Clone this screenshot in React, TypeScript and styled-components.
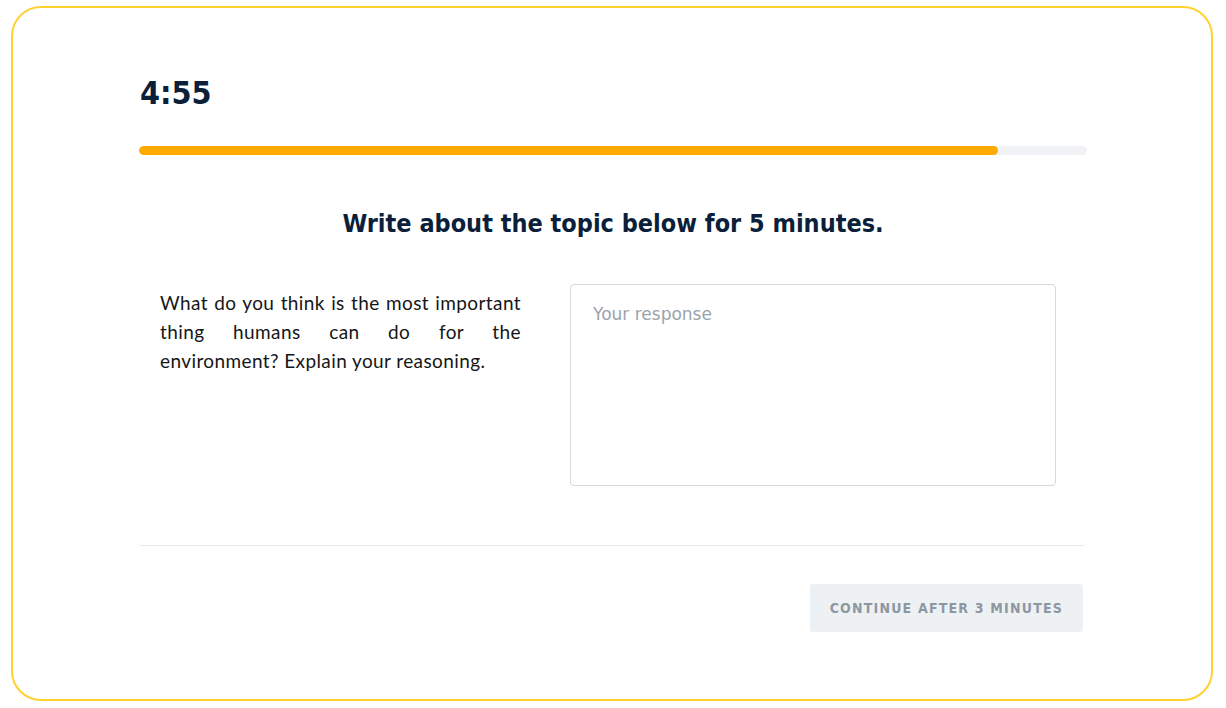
import React from 'react';
import styled, { createGlobalStyle } from 'styled-components';

const GlobalStyle = createGlobalStyle`
  html, body {
    margin: 0;
    padding: 0;
    background: #ffffff;
  }
  * {
    box-sizing: border-box;
  }
`;

const Frame = styled.div`
  margin: 6px 0 0 11px;
  width: 1202px;
  height: 695px;
  border: 2px solid #ffd12e;
  border-radius: 30px;
  background: #ffffff;
  padding-top: 65px;
`;

const Content = styled.div`
  width: 948px;
  margin: 0 0 0 126px;
  display: flex;
  flex-direction: column;
`;

const Timer = styled.div`
  font-family: 'DejaVu Sans Condensed', 'DejaVu Sans', sans-serif;
  font-weight: 700;
  font-size: 32px;
  line-height: 40px;
  color: #0c1f3a;
  padding-left: 1px;
`;

const Track = styled.div`
  margin-top: 33px;
  height: 9px;
  border-radius: 5px;
  background: #f0f2f5;
  overflow: hidden;
`;

const Fill = styled.div`
  height: 100%;
  border-radius: 5px;
  background: #ffaa00;
`;

const Heading = styled.h2`
  margin: 52px 0 0;
  text-align: center;
  font-family: 'DejaVu Sans Condensed', 'DejaVu Sans', sans-serif;
  font-weight: 700;
  font-size: 25px;
  line-height: 34px;
  color: #0c1f3a;
`;

const Row = styled.div`
  margin-top: 43px;
  display: flex;
  align-items: flex-start;
  gap: 49px;
  padding-left: 21px;
`;

const Prompt = styled.p`
  margin: 4px 0 0;
  width: 361px;
  font-family: Lato, 'Open Sans', sans-serif;
  font-size: 19px;
  letter-spacing: 0.4px;
  line-height: 29px;
  color: #161616;
  text-align: justify;
`;

const Response = styled.textarea`
  width: 486px;
  height: 202px;
  border: 1px solid #d6d9dd;
  border-radius: 4px;
  padding: 19px 22px;
  resize: none;
  outline: none;
  font-family: 'DejaVu Sans', sans-serif;
  font-size: 17px;
  color: #0c1f3a;

  &::placeholder {
    color: #9aa3ad;
  }
`;

const Divider = styled.hr`
  margin: 59px 3px 0 1px;
  border: none;
  border-top: 1px solid #e6e9ed;
`;

const Footer = styled.div`
  margin-top: 38px;
  display: flex;
  justify-content: flex-end;
  padding-right: 4px;
`;

const ContinueButton = styled.button`
  height: 48px;
  padding: 0 20px;
  border: none;
  border-radius: 3px;
  background: #eef1f4;
  font-family: 'DejaVu Sans Condensed', 'DejaVu Sans', sans-serif;
  font-weight: 700;
  font-size: 14px;
  letter-spacing: 1.2px;
  color: #8d97a2;
  cursor: not-allowed;
`;

const App: React.FC = () => {
  const progress = 90.6;

  return (
    <>
      <GlobalStyle />
      <Frame>
        <Content>
          <Timer>4:55</Timer>
          <Track>
            <Fill style={{ width: `${progress}%` }} />
          </Track>
          <Heading>Write about the topic below for 5 minutes.</Heading>
          <Row>
            <Prompt>
              What do you think is the most important thing humans can do for the environment? Explain your reasoning.
            </Prompt>
            <Response placeholder="Your response" />
          </Row>
          <Divider />
          <Footer>
            <ContinueButton disabled>CONTINUE AFTER 3 MINUTES</ContinueButton>
          </Footer>
        </Content>
      </Frame>
    </>
  );
};

export default App;
